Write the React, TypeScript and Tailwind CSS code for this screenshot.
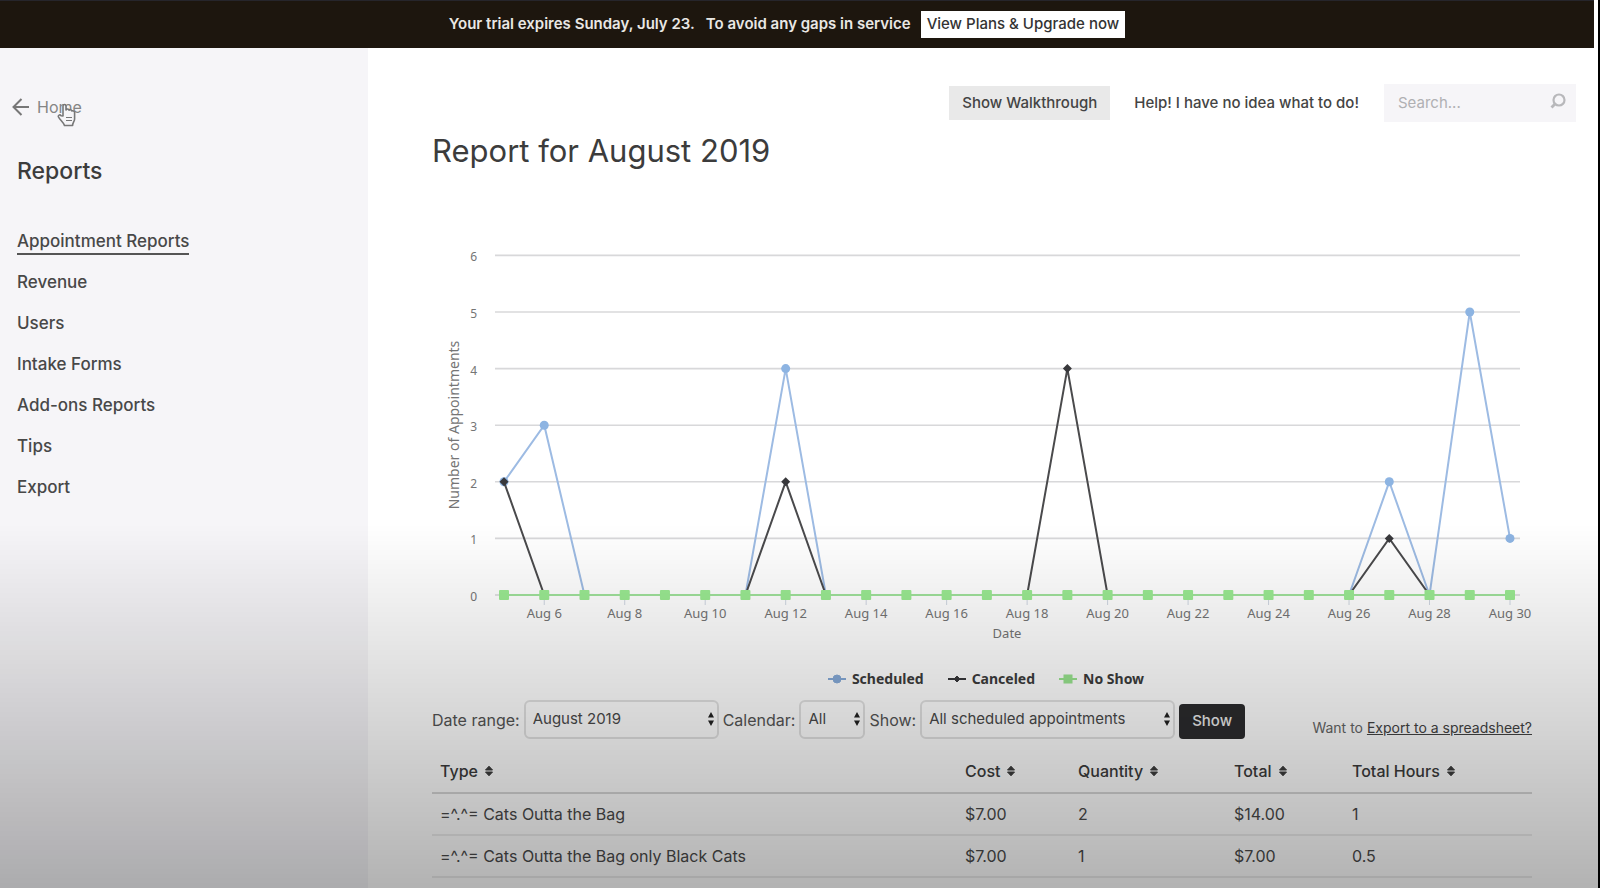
import type { ReactNode } from "react";

const navItems = [
  "Appointment Reports",
  "Revenue",
  "Users",
  "Intake Forms",
  "Add-ons Reports",
  "Tips",
  "Export",
];

const columns = [
  { label: "Type", width: "" },
  { label: "Cost", width: "w-[113px]" },
  { label: "Quantity", width: "w-[156px]" },
  { label: "Total", width: "w-[118px]" },
  { label: "Total Hours", width: "w-[188px]" },
];

const rows = [
  ["=^.^= Cats Outta the Bag", "$7.00", "2", "$14.00", "1"],
  ["=^.^= Cats Outta the Bag only Black Cats", "$7.00", "1", "$7.00", "0.5"],
];

// One value per day, Aug 5 to Aug 30
const scheduled = [2, 3, 0, 0, 0, 0, 0, 4, 0, 0, 0, 0, 0, 0, 0, 0, 0, 0, 0, 0, 0, 0, 2, 0, 5, 1];
const canceled = [2, 0, 0, 0, 0, 0, 0, 2, 0, 0, 0, 0, 0, 0, 4, 0, 0, 0, 0, 0, 0, 0, 1, 0, 0, 0];

const px = (i: number) => 72 + i * 40.24;
const py = (v: number) => 376 - v * 56.6;
const toPoints = (data: number[]) => data.map((v, i) => `${px(i)},${py(v)}`).join(" ");

const SortIcon = () => (
  <svg viewBox="0 0 10 12" className="w-2.5 h-3 shrink-0" fill="currentColor" stroke="currentColor" strokeLinejoin="round" aria-hidden="true">
    <path d="M5 1.2 8.5 5H1.5Z M5 10.8 8.5 7H1.5Z" />
  </svg>
);

function SelectBox({ id, width, value }: { id: string; width: string; value: string }) {
  return (
    <span className={`relative ${width}`}>
      <select
        id={id}
        defaultValue={value}
        className="w-full h-[39px] appearance-none rounded-md border-2 border-[#e2e2e2] bg-transparent pl-[7px] pr-5 text-[15px] text-[#4a4a4a]"
      >
        <option>{value}</option>
      </select>
      <svg
        viewBox="0 0 8 14"
        className="absolute right-1 top-3 w-2 h-3.5 pointer-events-none"
        fill="#222"
        aria-hidden="true"
      >
        <path d="M4 0 7 5.4H1Z M4 14 7 8.6H1Z" />
      </svg>
    </span>
  );
}

function Chart() {
  return (
    <svg
      viewBox="0 0 1100 428"
      className="block w-full h-auto font-['Noto_Sans',sans-serif]"
      role="img"
      aria-label="Number of appointments by date"
    >
      {[0, 1, 2, 3, 4, 5, 6].map((v) => (
        <g key={v}>
          <line x1="63" x2="1088" y1={py(v)} y2={py(v)} stroke="#d8d8da" strokeWidth="1.6" />
          <text x="45" y={py(v) + 6} textAnchor="end" fontSize="12" fill="#757575">
            {v}
          </text>
        </g>
      ))}
      <text
        transform="translate(27 206) rotate(-90)"
        textAnchor="middle"
        fontSize="14"
        fill="#757575"
      >
        Number of Appointments
      </text>

      {scheduled.map((_, i) =>
        i % 2 === 1 ? (
          <g key={i}>
            <line x1={px(i)} x2={px(i)} y1="376" y2="386" stroke="#d0d7e2" />
            <text x={px(i)} y="399" textAnchor="middle" fontSize="13" fill="#757575">
              Aug {i + 5}
            </text>
          </g>
        ) : null,
      )}
      <text x="575" y="419" textAnchor="middle" fontSize="13" fill="#757575">
        Date
      </text>

      <polyline points={toPoints(scheduled)} fill="none" stroke="#9dbbe3" strokeWidth="2" />
      {scheduled.map((v, i) =>
        v > 0 ? <circle key={i} cx={px(i)} cy={py(v)} r="4.5" fill="#8db4e2" /> : null,
      )}
      <polyline points={toPoints(canceled)} fill="none" stroke="#4a4a4c" strokeWidth="2" />
      {canceled.map((v, i) =>
        v > 0 ? (
          <path
            key={i}
            transform={`translate(${px(i)} ${py(v)})`}
            d="M0-4.5 4.5 0 0 4.5-4.5 0Z"
            fill="#38383b"
          />
        ) : null,
      )}
      <line x1={px(0)} x2={px(25)} y1="376" y2="376" stroke="#a0e29c" strokeWidth="2" />
      {scheduled.map((_, i) => (
        <rect key={i} x={px(i) - 5} y="371" width="10" height="10" rx="1" fill="#9bea92" />
      ))}
    </svg>
  );
}

function LegendItem({ label, color, children }: { label: string; color: string; children: ReactNode }) {
  return (
    <li className="flex items-center gap-1.5">
      <svg viewBox="0 0 18 12" className="w-[18px] h-3" fill={color} stroke={color} aria-hidden="true">
        <line x1="0" x2="18" y1="6" y2="6" strokeWidth="2" />
        {children}
      </svg>
      {label}
    </li>
  );
}

export default function App() {
  return (
    <div className="relative min-h-screen flex flex-col bg-white border-r-2 border-black font-['Inter',sans-serif] text-[#3c3c3c]">
      <div className="mr-1 h-12 flex items-center justify-center gap-2.5 bg-[#1d160e] border-t border-[#26252b] pr-5 text-[15px] font-medium text-[#e9e7e4]">
        <p className="font-semibold">
          Your trial expires Sunday, July 23. &nbsp; To avoid any gaps in service
        </p>
        <button className="h-[27px] px-1.5 bg-white text-[#333] whitespace-nowrap">
          View Plans &amp; Upgrade now
        </button>
      </div>

      <div className="flex flex-1">
        <aside className="w-[368px] shrink-0 bg-[#f6f5f8] pt-[47px]">
          <a href="#home" className="relative inline-flex items-center gap-[7px] pl-3 leading-6 text-[#858585]">
            <svg viewBox="0 0 18 18" className="w-[18px] h-[18px]" fill="none" stroke="#777" strokeWidth="2" aria-hidden="true">
              <path d="M17 9H1.5 M9.5 1 1.5 9 9.5 17" />
            </svg>
            Home
            <svg viewBox="0 0 20 24" className="absolute left-[57px] top-2 w-5 h-6" fill="#f6f5f8" stroke="#777" strokeWidth="1.6" strokeLinejoin="round" aria-hidden="true">
              <path d="M6 13V3.2C6 1 9 1 9 3.2V7c.5-1.4 2.8-1.2 3 .2.8-1 2.6-.6 2.8.8 1-.6 2.8 0 2.8 1.5V16c0 2.500-2 3.500-2 6.500H7.500c-.6-3-4.500-5.500-6-8.500-.7-1.800 1.400-2.800 2.600-1.300Z" />
              <path d="M9 14.5h6 M9 17.5h6" strokeWidth="1" />
            </svg>
          </a>
          <h2 className="mt-[33px] pl-[17px] text-[23px] leading-8 font-medium">Reports</h2>
          <nav className="mt-[42px] pl-[17px]">
            <ul className="flex flex-col gap-[17px] text-[17px] leading-6 font-medium text-[#484848]">
              {navItems.map((item, i) => (
                <li key={item} className="h-6">
                  <a
                    href="#report"
                    className={i === 0 ? "inline-block border-b-2 border-[#555]" : "inline-block"}
                  >
                    {item}
                  </a>
                </li>
              ))}
            </ul>
          </nav>
        </aside>

        <main className="flex-1 min-w-0 pl-16 pt-9">
          <div className="flex items-start justify-end pr-[22px]">
            <button className="h-[34px] px-[13px] mt-0.5 bg-[#e9e9e9] text-[15px] font-medium text-[#444]">
              Show Walkthrough
            </button>
            <a href="#help" className="ml-6 mt-[7px] text-[15px] leading-6 font-medium text-[#444]">
              Help! I have no idea what to do!
            </a>
            <label className="ml-[25px] w-48 h-[38px] flex items-center bg-[#f6f5f8] pl-3.5 pr-2.5">
              <input
                type="text"
                aria-label="Search"
                placeholder="Search..."
                className="min-w-0 flex-1 text-[15px] placeholder:text-[#b0b0b3] outline-none"
              />
              <svg viewBox="0 0 16 16" className="w-4 h-4 mb-1" fill="none" stroke="#b8b8bb" strokeWidth="2.2" aria-hidden="true">
                <circle cx="9" cy="7" r="5.5" />
                <path d="M5 11 1.5 14.5" strokeWidth="2.8" />
              </svg>
            </label>
          </div>

          <div className="pr-[66px]">
            <h1 className="mt-[9px] text-[31px] leading-10">Report for August 2019</h1>
            <div className="mt-12">
              <Chart />
            </div>

            <ul className="mt-[22px] flex justify-center gap-6 pl-2 text-sm leading-5 font-bold text-[#3c3c3c] font-['Noto_Sans',sans-serif]">
              <LegendItem label="Scheduled" color="#86abd8">
                <circle cx="9" cy="6" r="4" />
              </LegendItem>
              <LegendItem label="Canceled" color="#38383b">
                <path d="M9 3 12 6 9 9 6 6Z" />
              </LegendItem>
              <LegendItem label="No Show" color="#98e48e">
                <rect x="5" y="2" width="8" height="8" />
              </LegendItem>
            </ul>

            <form className="mt-[11px] flex items-start justify-between">
              <div className="flex items-center gap-1 text-[#555]">
                <label htmlFor="range">Date range:</label>
                <SelectBox id="range" width="w-[195px]" value="August 2019" />
                <label htmlFor="calendar">Calendar:</label>
                <SelectBox id="calendar" width="w-[66px]" value="All" />
                <label htmlFor="show">Show:</label>
                <SelectBox id="show" width="w-[255px]" value="All scheduled appointments" />
                <button
                  type="button"
                  className="h-[35px] w-[66px] mt-1 rounded bg-[#2c2c2e] text-[15px] font-medium text-[#ececec]"
                >
                  Show
                </button>
              </div>
              <p className="mt-4 text-sm leading-6 text-[#666]">
                Want to{" "}
                <a href="#export" className="underline text-[#444]">
                  Export to a spreadsheet?
                </a>
              </p>
            </form>

            <table className="mt-[9px] w-full table-fixed text-left text-base leading-6">
              <thead>
                <tr className="border-b-2 border-[#d8d8d8]">
                  {columns.map((c) => (
                    <th key={c.label} className={`px-2 pt-2.5 pb-[9px] font-medium ${c.width}`}>
                      <button type="button" className="flex items-center gap-1.5">
                        {c.label}
                        <SortIcon />
                      </button>
                    </th>
                  ))}
                </tr>
              </thead>
              <tbody>
                {rows.map((row) => (
                  <tr key={row[0]} className="h-[42px] border-b-2 border-[#ececec]">
                    {row.map((cell, i) => (
                      <td key={i} className="px-2 text-[#4a4a4a]">
                        {cell}
                      </td>
                    ))}
                  </tr>
                ))}
              </tbody>
            </table>
          </div>
        </main>
      </div>

      {/* Shade rising from the bottom edge */}
      <div className="fixed inset-x-0 bottom-0 h-[41vh] bg-linear-to-t from-black/30 to-transparent pointer-events-none" />
    </div>
  );
}
